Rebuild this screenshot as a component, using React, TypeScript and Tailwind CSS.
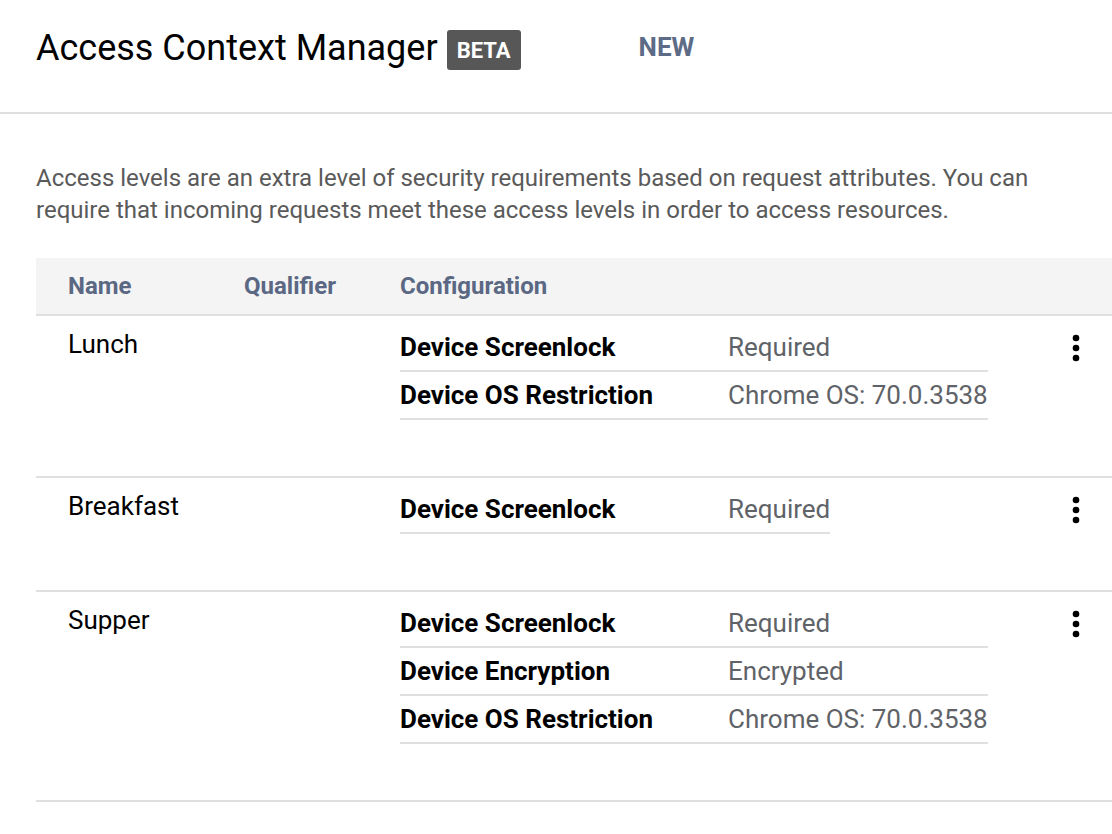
import React from 'react';

type Setting = { key: string; value: string };
type Level = { name: string; qualifier?: string; settings: Setting[] };

const levels: Level[] = [
  {
    name: 'Lunch',
    settings: [
      { key: 'Device Screenlock', value: 'Required' },
      { key: 'Device OS Restriction', value: 'Chrome OS: 70.0.3538' },
    ],
  },
  {
    name: 'Breakfast',
    settings: [{ key: 'Device Screenlock', value: 'Required' }],
  },
  {
    name: 'Supper',
    settings: [
      { key: 'Device Screenlock', value: 'Required' },
      { key: 'Device Encryption', value: 'Encrypted' },
      { key: 'Device OS Restriction', value: 'Chrome OS: 70.0.3538' },
    ],
  },
];

function MoreVert() {
  return (
    <svg width="40" height="40" viewBox="0 0 24 24" aria-hidden="true">
      <circle cx="12" cy="6" r="2" fill="#000" />
      <circle cx="12" cy="12" r="2" fill="#000" />
      <circle cx="12" cy="18" r="2" fill="#000" />
    </svg>
  );
}

export default function App() {
  return (
    <div className="min-h-[834px] bg-white font-['Roboto','Liberation_Sans',sans-serif] text-black">
      {/* Page header */}
      <div className="flex h-[114px] items-start border-b-2 border-[#e0e0e0] px-[36px] pt-[28px]">
        <h1 className="text-[36px] leading-[40px] font-normal">Access Context Manager</h1>
        <span className="ml-[9px] mt-[2px] flex h-[40px] w-[74px] items-center justify-center rounded-[3px] bg-[#575757] text-[22px] font-bold text-white">
          BETA
        </span>
        <button className="ml-[118px] mt-[3px] text-[26px] leading-[32px] font-bold text-[#5d6b87]">NEW</button>
      </div>

      {/* Intro */}
      <p className="mt-[48px] px-[36px] text-[24px] leading-[32px] text-[#5a5a5a]">
        Access levels are an extra level of security requirements based on request attributes. You can
        <br />
        require that incoming requests meet these access levels in order to access resources.
      </p>

      {/* Table */}
      <div className="ml-[36px] mt-[32px]">
        <div className="flex h-[58px] items-center border-b-2 border-[#e0e0e0] bg-[#f4f4f4] text-[24px] font-bold text-[#5b6884]">
          <div className="w-[176px] pl-[32px]">Name</div>
          <div className="w-[156px] pl-[32px]">Qualifier</div>
          <div className="flex-1 pl-[32px]">Configuration</div>
        </div>

        {levels.map((level) => (
          <div key={level.name} className="flex border-b-2 border-[#e0e0e0] pt-[8px] pb-[56px]">
            <div className="w-[176px] pl-[32px] pt-[8px] text-[26px] leading-[24px]">{level.name}</div>
            <div className="w-[156px] pl-[32px]">{level.qualifier}</div>
            <div className="flex-1 pl-[32px]">
              <div className="flex w-fit flex-col">
                {level.settings.map((s) => (
                  <div key={s.key} className="flex h-[48px] items-center border-b-2 border-[#e0e0e0] text-[26px] whitespace-nowrap">
                    <span className="w-[328px] font-bold">{s.key}</span>
                    <span className="text-[#5f6368]">{s.value}</span>
                  </div>
                ))}
              </div>
            </div>
            <div className="flex h-[48px] w-[72px] items-center justify-center">
              <MoreVert />
            </div>
          </div>
        ))}
      </div>
    </div>
  );
}
